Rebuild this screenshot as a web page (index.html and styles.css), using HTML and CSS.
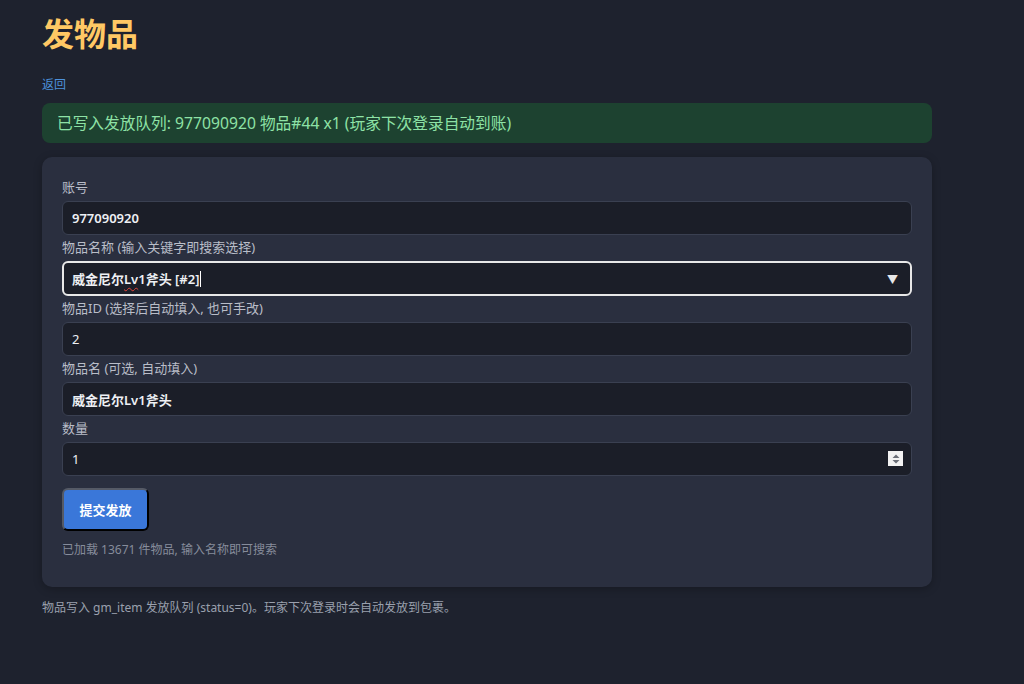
FILE: index.html
```html
<!DOCTYPE html>
<html lang="zh-CN">

<head>
    <meta charset="UTF-8">
    <meta name="viewport" content="width=device-width, initial-scale=1.0">
    <title>发物品</title>
    <link rel="stylesheet" href="styles.css">
</head>

<body>
    <div class="page">
        <h1 class="title">发物品</h1>
        <a href="#" class="back">返回</a>

        <div class="msg-ok">已写入发放队列: 977090920 物品#44 x1 (玩家下次登录自动到账)</div>

        <form class="card" onsubmit="return false">
            <label class="lbl">账号</label>
            <input class="field bold" type="text" value="977090920">

            <label class="lbl">物品名称 (输入关键字即搜索选择)</label>
            <div class="field combo bold">
                <span>威金尼尔<span class="typo">Lv</span>1斧头 [#2]</span><span class="caret"></span>
                <span class="arrow">&#9660;</span>
            </div>

            <label class="lbl">物品ID (选择后自动填入, 也可手改)</label>
            <input class="field" type="text" value="2">

            <label class="lbl">物品名 (可选, 自动填入)</label>
            <input class="field bold" type="text" value="威金尼尔Lv1斧头">

            <label class="lbl">数量</label>
            <div class="num-wrap">
                <input class="field" type="text" value="1">
                <span class="spin">
                    <svg width="10" height="12" viewBox="0 0 10 12">
                        <path d="M5 1.5 L8.5 5 H1.5 Z M5 10.5 L8.5 7 H1.5 Z" fill="#6b6f78" />
                    </svg>
                </span>
            </div>

            <button class="btn" type="submit">提交发放</button>

            <p class="hint">已加载 13671 件物品, 输入名称即可搜索</p>
        </form>

        <p class="foot">物品写入 gm_item 发放队列 (status=0)。玩家下次登录时会自动发放到包裹。</p>
    </div>
</body>

</html>
```

FILE: styles.css
```css
body {
    margin: 0;
    background-color: #1e222e;
    color: #d8dbe2;
    font-family: "Noto Sans", "Noto Sans CJK SC", sans-serif;
}

.page {
    width: 890px;
    padding: 0 42px;
}

.title {
    margin: 0;
    padding-top: 14px;
    font-size: 32px;
    line-height: 40px;
    font-weight: bold;
    color: #ffc864;
}

.back {
    display: inline-block;
    margin-top: 23px;
    font-size: 12px;
    line-height: 16px;
    color: #4d92dd;
    text-decoration: none;
}

.msg-ok {
    margin-top: 9px;
    height: 40px;
    padding: 0 15px;
    line-height: 40px;
    border-radius: 8px;
    background-color: #1d4230;
    color: #8ee2a6;
    font-size: 15.7px;
}

.card {
    margin-top: 14px;
    padding: 18px 20px 20px;
    background-color: #2a2f3f;
    border-radius: 10px;
    box-shadow: 0 2px 8px rgba(0, 0, 0, 0.25);
}

.lbl {
    display: block;
    margin: 3px 0 5px;
    font-size: 13px;
    line-height: 18px;
    color: #b9bdc8;
}

.field {
    display: block;
    box-sizing: border-box;
    width: 100%;
    height: 34px;
    padding: 0 9px;
    background-color: #1b1e28;
    border: 1px solid #3a4051;
    border-radius: 6px;
    color: #eef0f4;
    font-family: inherit;
    font-size: 13px;
    outline: none;
}

.bold {
    font-weight: 600;
}

.combo {
    position: relative;
    display: flex;
    align-items: center;
    height: 35px;
    border: 2px solid #e8e8e8;
    padding-left: 8px;
}

.typo {
    text-decoration: underline wavy #e0443a;
    text-decoration-thickness: 1px;
    text-underline-offset: 3px;
}

.caret {
    display: inline-block;
    width: 1px;
    height: 16px;
    margin-left: 1px;
    background-color: #ffffff;
}

.arrow {
    position: absolute;
    right: 12px;
    top: 8px;
    font-size: 11px;
    color: #e8e8e8;
}

.num-wrap {
    position: relative;
}

.spin {
    position: absolute;
    right: 9px;
    top: 9px;
    width: 15px;
    height: 15px;
    background-color: #f2f2f2;
    display: flex;
    align-items: center;
    justify-content: center;
}

.btn {
    display: block;
    margin-top: 12px;
    width: 87px;
    height: 43px;
    background-color: #3a77d9;
    color: #ffffff;
    font-family: inherit;
    font-size: 13px;
    font-weight: bold;
    border: 2px outset #555a66;
    border-right-color: #0c0e14;
    border-bottom-color: #0c0e14;
    border-radius: 6px;
    cursor: pointer;
}

.hint {
    margin: 11px 0 9px;
    font-size: 12px;
    line-height: 16px;
    color: #868c9b;
}

.foot {
    margin: 13px 0 0;
    font-size: 12px;
    line-height: 16px;
    color: #9aa0ad;
}
```
